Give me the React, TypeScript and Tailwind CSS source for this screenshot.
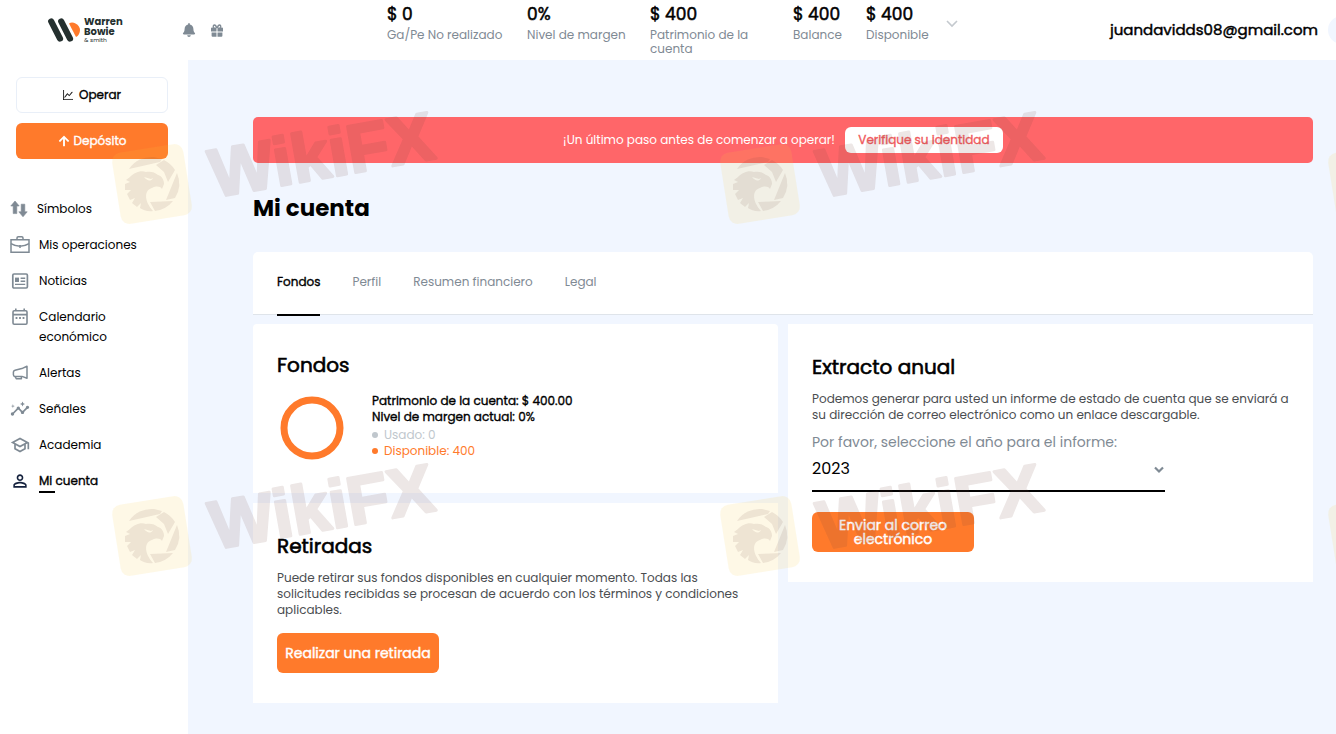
import { useState } from "react";
import type { ReactNode } from "react";
import { BsGraphUp } from "react-icons/bs";
import { FaArrowUp, FaBell } from "react-icons/fa";
import { MdInsights, MdOutlineSchool, MdPersonOutline } from "react-icons/md";

type Stat = {
  value: string;
  label: string;
  width: string;
};

type NavItem = {
  label: string;
  icon: ReactNode;
  active?: boolean;
};

const stats: Stat[] = [
  { value: "$ 0", label: "Ga/Pe No realizado", width: "w-[116px]" },
  { value: "0%", label: "Nivel de margen", width: "w-[99px]" },
  { value: "$ 400", label: "Patrimonio de la cuenta", width: "w-[119px]" },
  { value: "$ 400", label: "Balance", width: "w-[49px]" },
  { value: "$ 400", label: "Disponible", width: "w-[63px]" },
];

const tabs = ["Fondos", "Perfil", "Resumen financiero", "Legal"];

// regular weight with a thin outline, a bit lighter than semibold
const strong = "[-webkit-text-stroke:0.03em]";

function GiftIcon() {
  return (
    <svg width="12" height="13" viewBox="0 0 12 13" fill="currentColor">
      <path d="M0 4.6 Q0 3.6 1 3.6 H5.5 V7.4 H0 Z M6.5 3.6 H11 Q12 3.6 12 4.6 V7.4 H6.5 Z" />
      <path d="M0.6 8.5 H5.5 V12.8 H1.6 Q0.6 12.8 0.6 11.8 Z M6.5 8.5 H11.4 V11.8 Q11.4 12.8 10.4 12.8 H6.5 Z" />
      <path
        d="M5.8 4 C5.2 2 4.4 1 3.4 1 C2 1 1.8 3 3 3.8 M6.2 4 C6.8 2 7.6 1 8.6 1 C10 1 10.2 3 9 3.8"
        fill="none"
        stroke="currentColor"
        strokeWidth="1.3"
      />
    </svg>
  );
}

function ArrowsIcon() {
  return (
    <svg width="18" height="20" viewBox="1 0 18 20" fill="currentColor">
      <path d="M6 2 L10.2 7 H7.8 V14.6 H4.2 V7 H1.8 Z" stroke="currentColor" strokeWidth="0.6" strokeLinejoin="round" />
      <path d="M14 17.8 L9.8 12.8 H12.2 V5.2 H15.8 V12.8 H18.2 Z" stroke="currentColor" strokeWidth="0.6" strokeLinejoin="round" />
    </svg>
  );
}

function BriefcaseIcon() {
  return (
    <svg width="20" height="20" viewBox="0 0 20 20" fill="none" stroke="currentColor" strokeWidth="1.5">
      <path d="M1 4.8 H19 V17.2 H1 Z" />
      <path d="M7 4.6 V3 Q7 1.8 8.2 1.8 H11.8 Q13 1.8 13 3 V4.6" />
      <path d="M1 8.6 Q5 11.2 10 11.2 Q15 11.2 19 8.6 M10 10 V13" />
    </svg>
  );
}

function NewsIcon() {
  return (
    <svg width="20" height="20" viewBox="0 0 20 20" fill="none" stroke="currentColor" strokeWidth="1.7">
      <rect x="2.8" y="3" width="14.6" height="14" rx="1.2" />
      <path d="M5 6.6 H9 V11 H5 Z" fill="currentColor" stroke="none" />
      <path d="M10.6 7.2 H15.2 M10.6 10.2 H15.2 M5 13.4 H15.2" strokeWidth="1.4" />
    </svg>
  );
}

function CalendarIcon() {
  return (
    <svg width="20" height="20" viewBox="0 0 20 20" fill="none" stroke="currentColor" strokeWidth="1.6">
      <rect x="3" y="3.8" width="14" height="13.4" rx="1.2" />
      <path d="M3 7.6 H17 M5.8 1.4 V4 M14.2 1.4 V4" />
      <path d="M5.6 11 H7.4 M9.1 11 H10.9 M12.6 11 H14.4" strokeWidth="1.8" />
    </svg>
  );
}

function MegaphoneIcon() {
  return (
    <svg width="20" height="20" viewBox="0 0 20 20" fill="none" stroke="currentColor" strokeWidth="1.5">
      <path d="M17 3.2 V15.2 L12 13.4 H5 Q3.4 13.4 3.4 11.8 V9 Q3.4 7.6 5 7.2 L11.8 5.6 Z" strokeLinejoin="round" />
      <path d="M5 13.4 L6.4 15.8 H11.4 V13.4" strokeLinejoin="round" />
    </svg>
  );
}

const navItems: NavItem[] = [
  { label: "Símbolos", icon: <ArrowsIcon /> },
  { label: "Mis operaciones", icon: <BriefcaseIcon /> },
  { label: "Noticias", icon: <NewsIcon /> },
  { label: "Calendario económico", icon: <CalendarIcon /> },
  { label: "Alertas", icon: <MegaphoneIcon /> },
  { label: "Señales", icon: <MdInsights size={20} /> },
  { label: "Academia", icon: <MdOutlineSchool size={20} /> },
  { label: "Mi cuenta", icon: <MdPersonOutline size={20} />, active: true },
];

function Logo() {
  return (
    <a href="#inicio" className="flex w-[80px] shrink-0 items-center gap-1">
      <svg width="32" height="24" viewBox="0 0 32 24" fill="none" strokeLinecap="round" className="shrink-0">
        <path d="M21 5.4 C23 4.2 25.4 4.4 27.5 5.4 C30.6 7 32 9.6 32 12 C32 15.4 30.4 17.8 28 19 Z" fill="#ff7a2b" />
        <path d="M3.2 3.4 L12 20.6 M13.2 3.4 L22 20.6" stroke="#25302f" strokeWidth="6.2" />
      </svg>
      <span className="flex flex-col text-[10px] leading-[10px] font-bold text-[#25302f]">
        <span>Warren</span>
        <span>Bowie</span>
        <span className="text-[6px] leading-[6px] font-normal">&amp; smith</span>
      </span>
    </a>
  );
}

function Header() {
  return (
    <header className="flex h-[60px] items-center overflow-hidden bg-white pl-12">
      <Logo />
      <div className="ml-[54px] flex shrink-0 items-center gap-[15px] text-[#7f8a94]">
        <button type="button" aria-label="Notificaciones">
          <FaBell size={14} />
        </button>
        <button type="button" aria-label="Regalos">
          <GiftIcon />
        </button>
      </div>

      <div className="ml-[164px] flex shrink-0 gap-6 self-start pt-1">
        {stats.map((stat) => (
          <div key={stat.label} className={stat.width}>
            <p className={`text-[17px] leading-5 whitespace-nowrap ${strong}`}>{stat.value}</p>
            <p className="mt-1 text-xs leading-[14px] text-[#7f8a94]">{stat.label}</p>
          </div>
        ))}
      </div>
      <button type="button" aria-label="Mostrar más" className="mb-3 ml-[17px] shrink-0 text-[#c4c9ce]">
        <svg width="12" height="8" viewBox="0 0 12 8" fill="none" stroke="currentColor" strokeWidth="1.6">
          <path d="M1 1 L6 6 L11 1" />
        </svg>
      </button>

      <p className={`ml-auto text-[15px] leading-6 whitespace-nowrap ${strong}`}>
        juandavidds08@gmail.com
      </p>
      <span className="-mr-5 ml-[10px] size-7 shrink-0 rounded-full bg-[#f1f6ff]" />
    </header>
  );
}

function Sidebar() {
  return (
    <aside className="w-[188px] shrink-0 bg-white pt-[17px]">
      <div className={`flex flex-col gap-[10px] pr-5 pl-4 text-xs ${strong}`}>
        <button
          type="button"
          className="flex h-9 items-center justify-center gap-1.5 rounded-md border border-[#e9eff8]"
        >
          <BsGraphUp size={10} strokeWidth={0.5} />
          Operar
        </button>
        <button
          type="button"
          className="flex h-9 items-center justify-center gap-1 rounded-md bg-[#ff7a2b] text-white"
        >
          <FaArrowUp size={12} />
          Depósito
        </button>
      </div>

      <nav className="mt-10 flex flex-col gap-4 pl-[10px] text-xs leading-5">
        {navItems.map((item) => (
          <a key={item.label} href="#menu" className="flex items-start gap-[9px]">
            <span className={item.active ? "shrink-0 text-[#14213d]" : "shrink-0 text-[#7f8a94]"}>
              {item.icon}
            </span>
            <span className={item.active ? strong : "max-w-[110px]"}>
              {item.label}
              {item.active && <span className="block h-0.5 w-4 bg-black" />}
            </span>
          </a>
        ))}
      </nav>
    </aside>
  );
}

function FundsCard() {
  return (
    <section className="rounded-t bg-white px-6 pt-[27px] pb-[29px]">
      <h2 className={`text-xl leading-7 ${strong}`}>Fondos</h2>
      <div className="mt-[11px] flex items-start">
        <svg width="70" height="70" viewBox="0 0 70 70" className="mt-1 shrink-0">
          <circle cx="35" cy="34" r="28" fill="none" stroke="#ff7a2b" strokeWidth="7" />
        </svg>
        <div className="ml-[25px] pt-[3px] text-xs leading-4">
          <p className={strong}>Patrimonio de la cuenta: $ 400.00</p>
          <p className={strong}>Nivel de margen actual: 0%</p>
          <ul className="mt-0.5">
            <li className="flex items-center gap-1.5 text-[#c0c7cd]">
              <span className="size-1.5 rounded-full bg-[#c0c7cd]" />
              Usado: 0
            </li>
            <li className="flex items-center gap-1.5 text-[#ff7a2b]">
              <span className="size-1.5 rounded-full bg-[#ff7a2b]" />
              Disponible: 400
            </li>
          </ul>
        </div>
      </div>
    </section>
  );
}

function WithdrawCard() {
  return (
    <section className="bg-white px-6 pt-[29px] pb-[30px]">
      <h2 className={`text-xl leading-7 ${strong}`}>Retiradas</h2>
      <p className="mt-2.5 text-xs leading-4 text-[#4a4d50]">
        Puede retirar sus fondos disponibles en cualquier momento. Todas las solicitudes recibidas
        se procesan de acuerdo con los términos y condiciones aplicables.
      </p>
      <button
        type="button"
        className={`mt-[15px] h-10 w-[162px] rounded-md bg-[#ff7a2b] text-sm whitespace-nowrap text-white ${strong}`}
      >
        Realizar una retirada
      </button>
    </section>
  );
}

function StatementCard() {
  const [year, setYear] = useState("2023");

  return (
    <section className="self-start bg-white px-6 pt-[29px] pb-[30px]">
      <h2 className={`text-xl leading-7 ${strong}`}>Extracto anual</h2>
      <p className="mt-2.5 text-xs leading-4 text-[#4a4d50]">
        Podemos generar para usted un informe de estado de cuenta que se enviará a su dirección de
        correo electrónico como un enlace descargable.
      </p>
      <label htmlFor="year" className="mt-[9px] block text-sm leading-5 text-[#7f8a94]">
        Por favor, seleccione el año para el informe:
      </label>
      <div className="relative w-[353px] max-w-full">
        <select
          id="year"
          value={year}
          onChange={(e) => setYear(e.target.value)}
          className="block h-10 w-full appearance-none border-b-2 border-black bg-transparent pb-1 text-base leading-6 outline-none"
        >
          <option>2023</option>
          <option>2022</option>
          <option>2021</option>
        </select>
        <svg
          width="12"
          height="8"
          viewBox="0 0 12 8"
          fill="none"
          stroke="#7f8a94"
          strokeWidth="2.2"
          className="pointer-events-none absolute top-3.5 right-0"
        >
          <path d="M2 1.5 L6 5.5 L10 1.5" />
        </svg>
      </div>
      <button
        type="button"
        className={`mt-5 h-10 w-[162px] rounded-md bg-[#ff7a2b] px-4 text-sm leading-[14px] text-white ${strong}`}
      >
        Enviar al correo electrónico
      </button>
    </section>
  );
}

function Watermark() {
  return (
    <svg aria-hidden="true" className="pointer-events-none absolute inset-0 h-full w-full">
      <defs>
        <g id="mark">
          <rect
            x="-36"
            y="-36"
            width="72"
            height="72"
            rx="9"
            fill="#fac83c"
            fillOpacity="0.13"
            transform="rotate(-9)"
          />
          <g fill="#6d3f37" fillOpacity="0.11">
            <path d="M-23 -15 A27 27 0 0 1 2 -27 L10 -25 L8 -22 Z" />
            <path d="M4 -19 L12 -24 A27 27 0 0 1 23 -14 L16 -2 L12 -12 Z" />
            <path d="M25 -11 A27 27 0 0 1 23 14 L14 16 Z" />
            <path d="M21 17 A27 27 0 0 1 3 27 L-2 18 Z" />
            <path
              fillRule="evenodd"
              d="M-22 -7 C-18 -11 -12 -14 -6 -12 C-2 -13 3 -12 6 -9 C10 -8 12 -4 12 0 L10 5 C8 2 4 2 0 4 C-8 6 -8 17 1 27 C-4 28 -9 26 -12 24 L-11 19 L-15 23 L-20 19 L-17 14 L-22 16 L-25 10 L-21 6 L-27 6 L-27 0 L-22 -2 L-26 -4 Z M-8 -7 L-1 -5 L1 -6 C-1 -2 -5 -3 -8 -7 Z"
            />
          </g>
          <text
            x="59"
            y="24"
            fontSize="68"
            fontWeight="700"
            fontFamily="'Liberation Sans', sans-serif"
            fill="#6d3f37"
            stroke="#6d3f37"
            strokeWidth="3"
            strokeLinejoin="round"
            opacity="0.13"
            transform="rotate(-10)"
          >
            WikiFX
          </text>
        </g>
        <pattern id="marks" x="0" y="8" width="608" height="352" patternUnits="userSpaceOnUse">
          <use href="#mark" transform="translate(152 176)" />
        </pattern>
      </defs>
      <rect width="100%" height="100%" fill="url(#marks)" />
    </svg>
  );
}

export default function App() {
  const [tab, setTab] = useState("Fondos");

  return (
    <div className="relative flex min-h-screen flex-col bg-[#f1f6ff] font-['Poppins',Inter,sans-serif] text-black">
      <Header />
      <div className="flex flex-1">
        <Sidebar />
        <main className="min-w-0 flex-1 pt-[57px] pr-[23px] pb-[31px] pl-[65px]">
          <div className="flex min-h-[46px] items-center justify-center gap-[10px] rounded-[5px] bg-[#ff6669] text-xs text-white">
            <p>¡Un último paso antes de comenzar a operar!</p>
            <button
              type="button"
              className={`h-[26px] w-[158px] rounded-md bg-white text-[#f0595c] ${strong}`}
            >
              Verifique su identidad
            </button>
          </div>

          <h1 className="mt-[29px] text-[23px] leading-8 font-bold">Mi cuenta</h1>

          <div className="mt-7 flex h-[63px] gap-8 rounded-t-[5px] border-b border-[#dfe4ea] bg-white px-6 text-xs">
            {tabs.map((name) => (
              <button
                key={name}
                type="button"
                onClick={() => setTab(name)}
                className={
                  name === tab
                    ? `-mb-0.5 border-b-2 border-black pb-0.5 ${strong}`
                    : "pb-0.5 text-[#7f8a94]"
                }
              >
                {name}
              </button>
            ))}
          </div>

          <div className="mt-[9px] grid grid-cols-2 gap-[10px]">
            <div className="flex flex-col gap-[10px]">
              <FundsCard />
              <WithdrawCard />
            </div>
            <StatementCard />
          </div>
        </main>
      </div>
      <Watermark />
    </div>
  );
}
